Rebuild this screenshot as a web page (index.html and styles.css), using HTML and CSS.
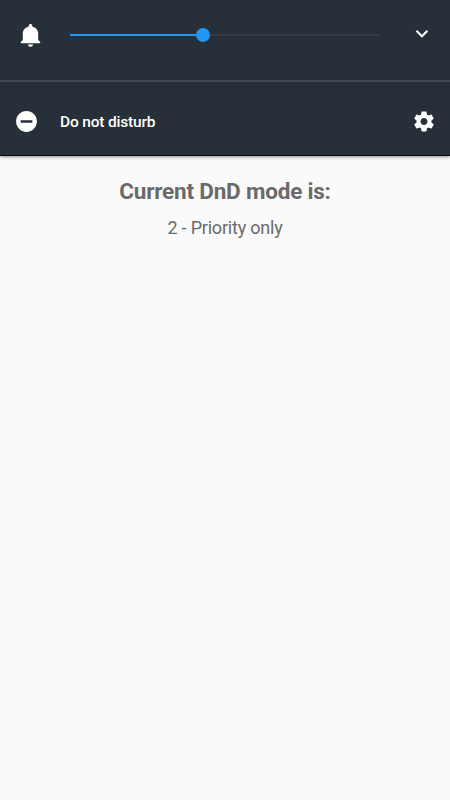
FILE: index.html
```
<!DOCTYPE html>
<html lang="en">
<head>
    <meta charset="UTF-8">
    <meta name="viewport" content="width=device-width, initial-scale=1.0">
    <title>Do not disturb</title>
    <link rel="stylesheet" href="styles.css">
</head>
<body>

<div class="panel">
    <div class="volume-row">
        <svg class="icon bell" viewBox="0 0 25 25"><path d="M12.5 1C11.5 1 10.8 1.7 10.8 2.6v.8C7.2 4.2 4.8 7 4.8 10.5V17L2.8 19v1.3h19.4V19l-2-2v-6.5c0-3.5-2.4-6.3-6-7.1v-.8C14.2 1.7 13.5 1 12.5 1zM10 21.4h5c0 1.3-1.1 2.3-2.5 2.3S10 22.7 10 21.4z"/></svg>
        <div class="slider">
            <div class="slider-fill"></div>
            <div class="slider-thumb"></div>
            <div class="slider-rest"></div>
        </div>
        <svg class="icon chevron" viewBox="0 0 24 24"><path d="M7.8 7.7L12.4 12.3l4.6-4.6L18.4 9.1l-6 6-6-6z"/></svg>
    </div>
    <div class="dnd-row">
        <svg class="icon dnd" viewBox="0 0 24 24"><path d="M12 2C6.48 2 2 6.48 2 12s4.48 10 10 10 10-4.48 10-10S17.52 2 12 2zm5.6 11.2H6.4v-2.5h11.2v2.5z"/></svg>
        <span class="dnd-label">Do not disturb</span>
        <svg class="icon gear" viewBox="0 0 24 24"><path d="M19.43 12.98c.04-.32.07-.64.07-.98s-.03-.66-.07-.98l2.11-1.65c.19-.15.24-.42.12-.64l-2-3.46c-.12-.22-.39-.3-.61-.22l-2.49 1c-.52-.4-1.08-.73-1.69-.98l-.38-2.65C14.46 2.18 14.25 2 14 2h-4c-.25 0-.46.18-.49.42l-.38 2.65c-.61.25-1.17.59-1.69.98l-2.49-1c-.23-.09-.49 0-.61.22l-2 3.46c-.13.22-.07.49.12.64l2.11 1.65c-.04.32-.07.65-.07.98s.03.66.07.98l-2.11 1.65c-.19.15-.24.42-.12.64l2 3.46c.12.22.39.3.61.22l2.49-1c.52.4 1.08.73 1.69.98l.38 2.65c.03.24.24.42.49.42h4c.25 0 .46-.18.49-.42l.38-2.65c.61-.25 1.17-.59 1.69-.98l2.49 1c.23.09.49 0 .61-.22l2-3.46c.12-.22.07-.49-.12-.64l-2.11-1.65zM12 15.5c-1.93 0-3.5-1.57-3.5-3.5s1.57-3.5 3.5-3.5 3.5 1.57 3.5 3.5-1.57 3.5-3.5 3.5z"/></svg>
    </div>
</div>

<div class="content">
    <h1>Current DnD mode is:</h1>
    <p>2 - Priority only</p>
</div>

</body>
</html>
```
FILE: styles.css
```
* {
    box-sizing: border-box;
}
body {
    margin: 0;
    min-height: 800px;
    font-family: Roboto, sans-serif;
    background-color: #fafafa;
}
.panel {
    height: 156px;
    background-color: #272f38;
    border-bottom: 1px solid #080b0f;
    box-shadow: 0 1px 3px rgba(0, 0, 0, 0.45);
}
.volume-row {
    display: flex;
    align-items: center;
    height: 82px;
    padding: 0 15px 10px 18px;
    border-bottom: 2px solid #414952;
}
.icon {
    display: block;
    flex: none;
    width: 25px;
    height: 25px;
    fill: #fff;
}
.chevron {
    margin-bottom: 1px;
}
.slider {
    display: flex;
    align-items: center;
    width: 310px;
    height: 14px;
    margin: 0 29px 0 27px;
}
.slider-fill {
    width: 126px;
    height: 2px;
    background-color: #2196f3;
}
.slider-thumb {
    width: 14px;
    height: 14px;
    border-radius: 50%;
    background-color: #2196f3;
}
.slider-rest {
    flex: 1;
    height: 2px;
    background-color: #323a43;
}
.dnd-row {
    display: flex;
    align-items: center;
    height: 73px;
    padding: 6px 14px 0;
}
.dnd-label {
    flex: 1;
    margin-left: 21px;
    font-size: 15.5px;
    font-weight: 500;
    letter-spacing: -0.18px;
    color: #fff;
}
.gear {
    width: 24px;
}
.content {
    padding-top: 21px;
    text-align: center;
    color: #6a6a6a;
}
h1 {
    margin: 0;
    font-size: 22.5px;
    line-height: 28px;
    font-weight: 700;
    letter-spacing: -0.2px;
}
p {
    margin: 11px 0 0;
    font-size: 18px;
    line-height: 24px;
    letter-spacing: -0.2px;
}
```
